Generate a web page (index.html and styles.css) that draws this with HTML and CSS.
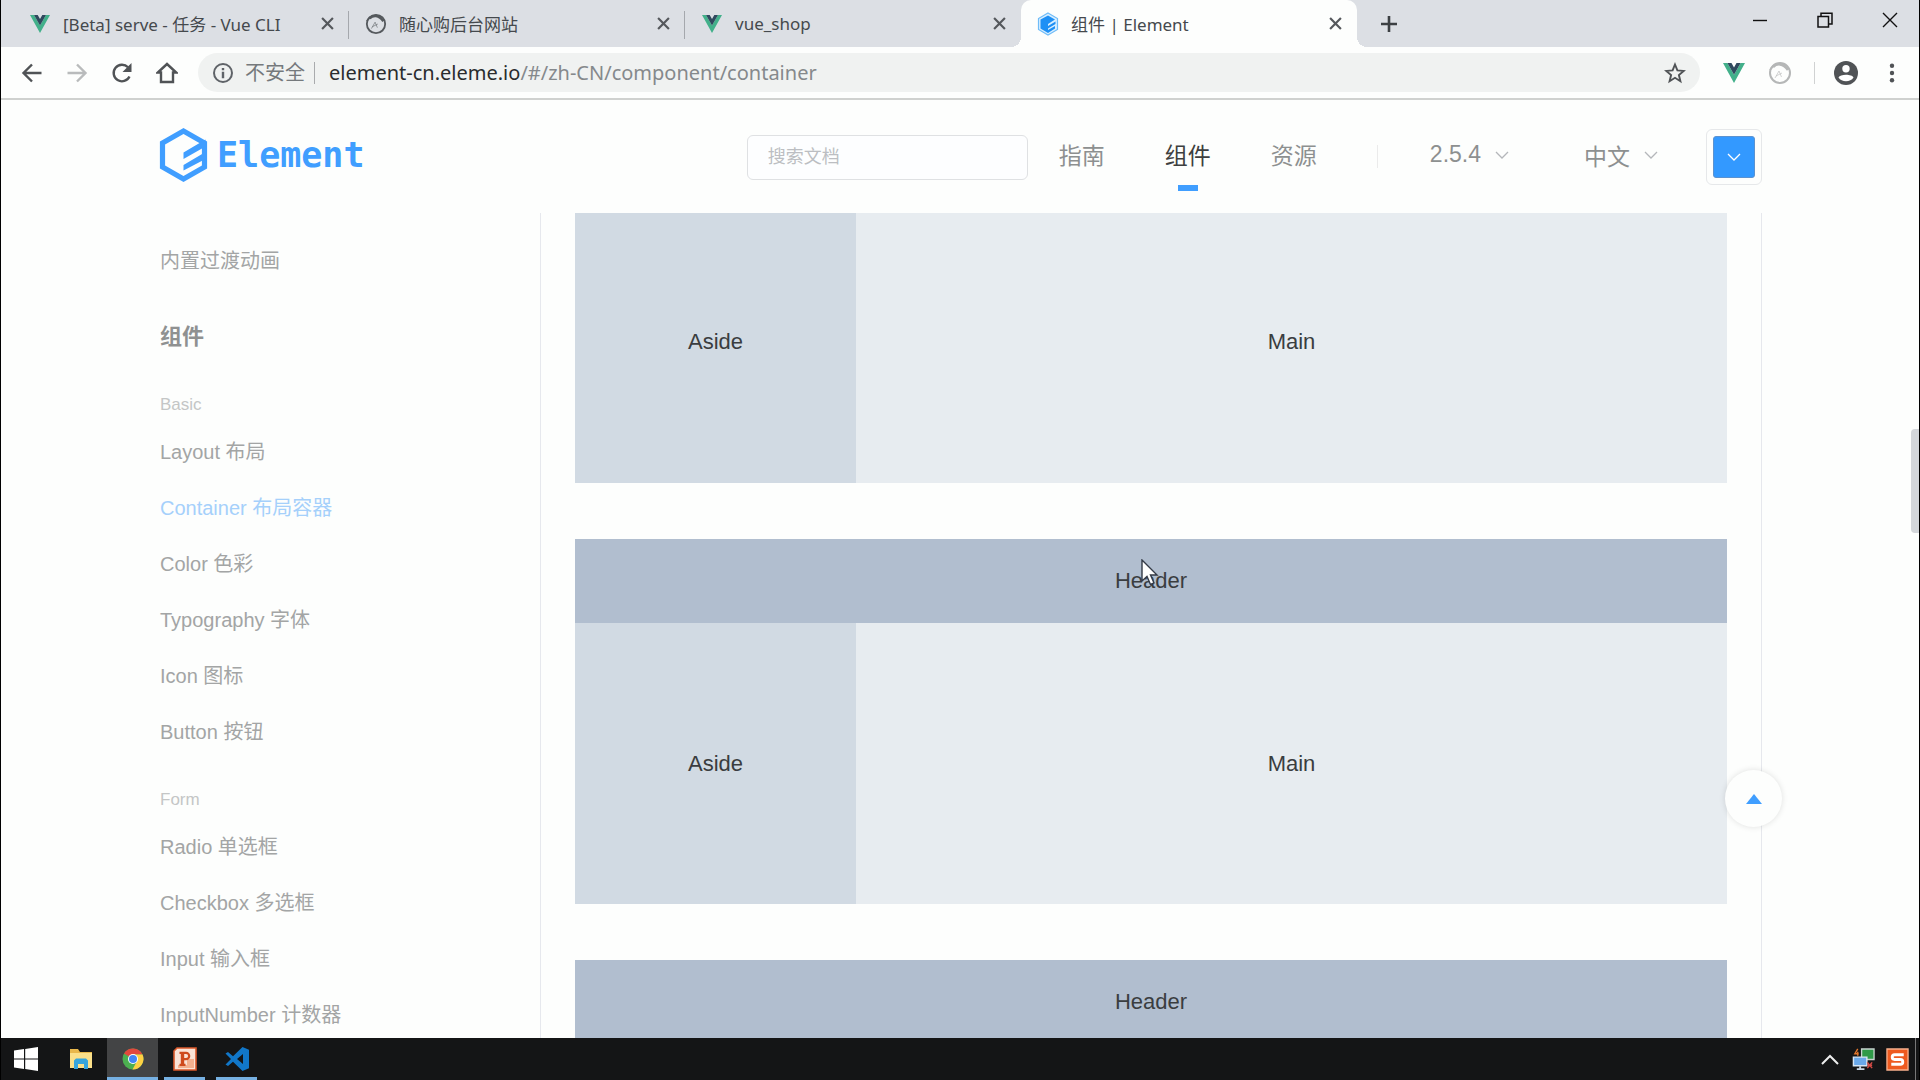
FILE: index.html
```html
<!DOCTYPE html>
<html lang="zh-CN">
<head>
<meta charset="utf-8">
<title>组件 | Element</title>
<link rel="stylesheet" href="styles.css">
</head>
<body>
<svg class="defs" aria-hidden="true">
  <symbol id="vue" viewBox="0 0 20 18"><path fill="#42b08a" d="M0 0h4l6 10.500L16 0h4L10 18z"/><path fill="#2f495e" d="M4 0h3.700L10 4l2.300-4H16l-6 10.500z"/></symbol>
  <symbol id="ring" viewBox="0 0 24 24"><g fill="none" stroke="currentColor"><circle cx="12" cy="12" r="10" stroke-width="2"/><path d="M2 9C5 2 14 1 18 5" stroke-width="1.500"/><path d="M5 6c4-4 10-4 15 3" stroke-width="2.600"/><path d="M7 17l4-7 2.500 6M8 15l6-3" stroke-width="1" opacity=".6"/></g></symbol>
  <symbol id="cross" viewBox="0 0 12 12"><path d="M1 1l10 10M11 1L1 11" stroke="currentColor" stroke-width="2" fill="none"/></symbol>
  <symbol id="chevron" viewBox="0 0 14 8"><path d="M1 1l6 6 6-6" stroke="currentColor" stroke-width="1.300" fill="none"/></symbol>
</svg>

<header class="tabstrip">
  <div class="tab">
    <svg class="favicon"><use href="#vue"/></svg>
    <span class="tab-title">[Beta] serve - 任务 - Vue CLI</span>
    <button class="tab-close" aria-label="关闭"><svg><use href="#cross"/></svg></button>
  </div>
  <div class="tab">
    <svg class="favicon ring"><use href="#ring"/></svg>
    <span class="tab-title">随心购后台网站</span>
    <button class="tab-close" aria-label="关闭"><svg><use href="#cross"/></svg></button>
  </div>
  <div class="tab plain">
    <svg class="favicon"><use href="#vue"/></svg>
    <span class="tab-title">vue_shop</span>
    <button class="tab-close" aria-label="关闭"><svg><use href="#cross"/></svg></button>
  </div>
  <div class="tab active">
    <svg class="favicon ring" viewBox="0 0 22 24"><path d="M11 1l9.500 5.500v11L11 23l-9.500-5.500v-11z" fill="#d9efff" stroke="#6fbcf8" stroke-width="1.200"/><path d="M11 3.500L18 7.500l-7 4.500v2l7.500-4.500v2.500L11 16.500v1.500l7-4v2.500l-7 4.500-7.500-4.500v-9z" fill="#1e90f5"/></svg>
    <span class="tab-title">组件 | Element</span>
    <button class="tab-close" aria-label="关闭"><svg><use href="#cross"/></svg></button>
  </div>
  <button class="new-tab" aria-label="新标签页"><svg viewBox="0 0 18 18"><path d="M9 1v16M1 9h16" stroke="#3c4043" stroke-width="2.600"/></svg></button>
  <div class="window-controls">
    <button aria-label="最小化"><svg viewBox="0 0 16 16"><path d="M1 8.500h14" stroke="#111" stroke-width="1.400"/></svg></button>
    <button aria-label="还原"><svg viewBox="0 0 16 16"><path d="M1 4.500h10.500V15H1zM4 4V1.200h11V12h-3" fill="none" stroke="#111" stroke-width="1.500"/></svg></button>
    <button aria-label="关闭窗口"><svg viewBox="0 0 16 16"><path d="M1 1l14 14M15 1L1 15" stroke="#111" stroke-width="1.400"/></svg></button>
  </div>
</header>

<nav class="toolbar">
  <button aria-label="后退"><svg viewBox="0 0 22 22"><path d="M20.500 11H3M11 2.500L2.500 11l8.500 8.500" fill="none" stroke="#505356" stroke-width="2.400"/></svg></button>
  <button aria-label="前进"><svg viewBox="0 0 22 22"><path d="M1.500 11H19M11 2.500l8.500 8.500-8.500 8.500" fill="none" stroke="#b9bbbc" stroke-width="2.400"/></svg></button>
  <button aria-label="刷新"><svg viewBox="0 0 22 22"><path d="M18.500 14.500A8.300 8.300 0 1 1 17 5.300" fill="none" stroke="#505356" stroke-width="2.400"/><path d="M20.500 1v9h-9z" fill="#505356"/></svg></button>
  <button aria-label="主页"><svg viewBox="0 0 22 22"><path d="M5 20V10.500H1.800L11 2l9.200 8.500H17V20z" fill="none" stroke="#505356" stroke-width="2.400"/></svg></button>
  <div class="omnibox">
    <svg class="info" viewBox="0 0 22 22"><circle cx="11" cy="11" r="9" fill="none" stroke="#5f6368" stroke-width="2"/><path d="M11 6v2.200M11 9.800v6.400" stroke="#5f6368" stroke-width="2.400"/></svg>
    <span class="insecure">不安全</span>
    <span class="url">element-cn.eleme.io<span>/#/zh-CN/component/container</span></span>
    <button aria-label="收藏"><svg viewBox="0 0 22 22"><path d="M11 2.500l2.400 5.900 6.300.5-4.800 4.100 1.500 6.200-5.400-3.400-5.400 3.400L7.100 13 2.300 8.900l6.300-.5z" fill="none" stroke="#505356" stroke-width="1.900"/></svg></button>
  </div>
  <button aria-label="Vue"><svg><use href="#vue"/></svg></button>
  <button class="faded" aria-label="扩展"><svg><use href="#ring"/></svg></button>
  <span class="rule"></span>
  <button aria-label="用户"><svg class="avatar" viewBox="0 0 24 24"><circle cx="12" cy="12" r="12" fill="#505356"/><circle cx="12" cy="7.800" r="3.700" fill="#fff"/><path d="M4.500 16.500c1.500-3.800 13.500-3.800 15 0-3 5-12 5-15 0z" fill="#fff"/></svg></button>
  <button class="menu" aria-label="菜单"><svg viewBox="0 0 22 22"><g fill="#505356"><circle cx="11" cy="3.800" r="2.200"/><circle cx="11" cy="11" r="2.200"/><circle cx="11" cy="18.200" r="2.200"/></g></svg></button>
</nav>

<div class="page">
  <header class="site-header">
    <div class="container site-bar">
      <a class="logo" href="#">
        <svg viewBox="0 0 48 54"><path d="M24 3L45 15v24L24 51 3 39V15z" fill="none" stroke="#409eff" stroke-width="5.200"/><path d="M24 24.500L46 11.500v7L24 31zM24 37L46 24v7L24 42.500z" fill="#409eff"/></svg>
        <span>Element</span>
      </a>
      <input class="search" type="text" placeholder="搜索文档" aria-label="搜索文档">
      <a class="nav-link" href="#">指南</a>
      <a class="nav-link current" href="#">组件</a>
      <a class="nav-link" href="#">资源</a>
      <span class="divider"></span>
      <button class="picker version">2.5.4<svg><use href="#chevron"/></svg></button>
      <button class="picker">中文<svg><use href="#chevron"/></svg></button>
      <button class="theme" aria-label="主题颜色"><span><svg><use href="#chevron"/></svg></span></button>
    </div>
  </header>

  <div class="container body">
    <aside class="sidebar">
      <a href="#">内置过渡动画</a>
      <h2>组件</h2>
      <h3>Basic</h3>
      <a href="#">Layout 布局</a>
      <a class="current" href="#">Container 布局容器</a>
      <a href="#">Color 色彩</a>
      <a href="#">Typography 字体</a>
      <a href="#">Icon 图标</a>
      <a href="#">Button 按钮</a>
      <h3>Form</h3>
      <a href="#">Radio 单选框</a>
      <a href="#">Checkbox 多选框</a>
      <a href="#">Input 输入框</a>
      <a href="#">InputNumber 计数器</a>
    </aside>
    <main class="demo">
      <section class="layout first">
        <div class="row short"><div class="el-aside">Aside</div><div class="el-main">Main</div></div>
      </section>
      <section class="layout">
        <div class="el-header">Header</div>
        <div class="row"><div class="el-aside">Aside</div><div class="el-main">Main</div></div>
      </section>
      <section class="layout">
        <div class="el-header">Header</div>
      </section>
    </main>
  </div>
  <button class="to-top" aria-label="回到顶部"><svg viewBox="0 0 16 10"><path d="M8 0l8 10H0z" fill="#409eff"/></svg></button>
  <span class="scroll-thumb"></span>
  <svg class="cursor" viewBox="0 0 18 28"><path d="M1 1v21l5-4.500 3.500 8 3.500-1.500-3.500-8H16z" fill="#fff" stroke="#343b47" stroke-width="1.400"/></svg>
</div>

<footer class="taskbar">
  <button class="task" aria-label="开始"><svg viewBox="0 0 24 24"><path fill="#fff" d="M0 3.500l10-1.400v9.300H0zM11.200 1.900L24 0v11.400H11.200zM0 12.600h10v9.300L0 20.500zM11.200 12.600H24V24l-12.800-1.900z"/></svg></button>
  <button class="task" aria-label="资源管理器"><svg viewBox="0 0 24 24"><path fill="#e9b84c" d="M1 2h8l2 3h12v16H1z"/><path fill="#fbe08a" d="M1 6h22v15H1z"/><path fill="#37a5dc" d="M5 13.500l2-2h10l2 2V22h-4v-5H9v5H5z"/></svg></button>
  <button class="task running focused" aria-label="Chrome"><svg viewBox="0 0 24 24"><circle cx="12" cy="12" r="10.500" fill="#4caf50"/><path d="M12 12L3 6.600A10.500 10.500 0 0 1 21.500 7.500H12z" fill="#e2483d"/><path d="M12 7.500h9.500A10.500 10.500 0 0 1 11.500 22.500L16 14z" fill="#fdd043"/><circle cx="12" cy="12" r="5" fill="#fff"/><circle cx="12" cy="12" r="4" fill="#4285f4"/></svg></button>
  <button class="task running" aria-label="PowerPoint"><svg viewBox="0 0 24 24"><path d="M4 1h19v22H1V4z" fill="#fbe3d6" stroke="#d9582b" stroke-width="1.600"/><path d="M14 12h7v9H5v-3h9z" fill="#f3b08f"/><path d="M9.500 5v13" fill="none" stroke="#cf4a1d" stroke-width="3.400"/><path d="M6.500 5.800H13a3 3 0 0 1 0 6.400H9M6.500 17.800h6" fill="none" stroke="#cf4a1d" stroke-width="2.200"/></svg></button>
  <button class="task running" aria-label="VS Code"><svg viewBox="0 0 24 24"><path fill="#1177c9" d="M17.500 0L24 2.800v18.400L17.500 24 8 14.800 3 19l-2.500-1.500L6 12 .5 6.500 3 5l5 4.200zm.5 7l-6 5 6 5z"/></svg></button>
  <div class="tray">
    <svg class="up" viewBox="0 0 18 11"><path d="M1 10l8-8 8 8" fill="none" stroke="#eee" stroke-width="2"/></svg>
    <svg viewBox="0 0 24 24"><path d="M10 1h13v11H10z" fill="#2f9a48" stroke="#c8d3cf" stroke-width="1.400"/><path d="M1.500 9.500h14v9h-14z" fill="#6aa9ea" stroke="#d6e5f4" stroke-width="1.500"/><path d="M5 22h8M8.500 19v3" stroke="#c9d6e4" stroke-width="2"/><path d="M6 1L3 6h4M6 4v4" stroke="#e0762c" stroke-width="1.500" fill="none"/><path d="M16 15l5 6m0-6l-5 6m0-3h5" stroke="#d24a45" stroke-width="1.600"/></svg>
    <svg viewBox="0 0 24 24"><path d="M1 1h22v22H1z" fill="#ee5a1f" stroke="#f6b08d" stroke-width="1.400"/><path d="M18.500 7H9a2.500 2.500 0 0 0 0 5h6a2.500 2.500 0 0 1 0 5H5.500" fill="none" stroke="#fff" stroke-width="3"/></svg>
  </div>
</footer>
</body>
</html>
```
FILE: styles.css
```css
* { box-sizing: border-box; }

body {
  margin: 0;
  height: 100vh;
  display: flex;
  flex-direction: column;
  overflow: hidden;
  border: 0 solid #000;
  border-width: 0 1px;
  background: #fdfefd;
  font-family: "Liberation Sans", "Noto Sans CJK SC", sans-serif;
}

button {
  padding: 0;
  border: 0;
  background: none;
  font: inherit;
  color: inherit;
}

a { color: inherit; text-decoration: none; }
svg { display: block; }
.defs { display: none; }

/* Browser tabs */
.tabstrip {
  display: flex;
  height: 47px;
  flex: none;
  padding-left: 12px;
  background: #dcdfe4;
  font-family: "Noto Sans", "Noto Sans CJK SC", sans-serif;
}

.tab {
  display: flex;
  align-items: center;
  width: 336px;
  padding: 0 15px 0 16px;
  position: relative;
  color: #45494d;
  font-size: 17px;
}

.tab::after {
  content: "";
  position: absolute;
  right: 0;
  top: 11px;
  width: 1px;
  height: 28px;
  background: #a5a8ad;
}

.tab.plain::after { display: none; }
.favicon { width: 22px; height: 18px; margin-right: 12px; }
.favicon.ring { height: 24px; color: #55595d; }
.tab-title { flex: 1; white-space: nowrap; }
.tab-close { color: #55585c; }
.tab-close svg { width: 13px; height: 13px; }

.tab.active {
  background: #fdfefd;
  border-radius: 10px 10px 0 0;
}

.tab.active::before,
.tab.active::after {
  content: "";
  position: absolute;
  top: auto;
  bottom: 0;
  width: 10px;
  height: 10px;
  background: radial-gradient(circle at 0 0, transparent 10px, #fdfefd 10px);
}

.tab.active::before { left: -10px; }

.tab.active::after {
  right: -10px;
  background: radial-gradient(circle at 100% 0, transparent 10px, #fdfefd 10px);
}

.new-tab { margin-left: 23px; }
.new-tab svg { width: 18px; height: 18px; }

.window-controls {
  display: flex;
  gap: 49px;
  margin-left: auto;
  padding: 12px 21px 0 0;
  align-items: flex-start;
}

.window-controls svg { width: 16px; height: 16px; }

/* Address bar */
.toolbar {
  display: flex;
  align-items: center;
  flex: none;
  height: 53px;
  gap: 22px;
  padding: 0 16px 0 20px;
  border-bottom: 2px solid #cfd1cf;
  font-family: "Noto Sans", "Noto Sans CJK SC", sans-serif;
}

.toolbar svg { width: 22px; height: 22px; }
.toolbar > button + button { margin-left: 1px; }

.omnibox {
  display: flex;
  align-items: center;
  flex: 1;
  height: 39px;
  padding: 0 14px;
  border-radius: 20px;
  background: #f0f2f1;
  font-size: 20px;
  margin: 0 1px 0 -2px;
}

.insecure {
  margin-left: 11px;
  padding-right: 9px;
  border-right: 1px solid #a9abad;
  color: #75797c;
  line-height: 22px;
}

.url { flex: 1; margin-left: 14px; color: #2a2c2e; }
.url span { color: #85898c; }
.toolbar .faded { color: #b5b7b7; }
.toolbar .faded svg { width: 24px; height: 24px; }
.rule { width: 1px; height: 22px; margin-right: -3px; background: #d0d2d2; }
.toolbar .avatar { width: 24px; height: 24px; }

/* Web page */
.page {
  flex: 1;
  min-height: 0;
  position: relative;
  overflow: hidden;
}

.container { max-width: 1604px; margin: 0 auto; }
.site-header { height: 113px; }

.site-bar {
  display: flex;
  align-items: center;
  height: 112px;
  color: #8d9090;
  font-size: 23px;
}

.logo {
  display: flex;
  align-items: center;
  gap: 9px;
  margin-left: 1px;
  margin-right: auto;
  padding-bottom: 2px;
  color: #409eff;
  font: bold 35px "DejaVu Sans Mono", monospace;
}

.logo svg { width: 49px; height: 54px; }

.search {
  width: 281px;
  height: 45px;
  margin: 2px 31px 0 0;
  padding: 0 20px;
  border: 1px solid #dfe1e3;
  border-radius: 6px;
  background: #fdfeff;
  font: 18px "Liberation Sans", "Noto Sans CJK SC", sans-serif;
}

.search::placeholder { color: #bcbec2; opacity: 1; }

.nav-link {
  position: relative;
  margin-right: 60px;
  line-height: 110px;
}

.nav-link.current { color: #3d3f40; }

.nav-link.current::after {
  content: "";
  position: absolute;
  left: 50%;
  bottom: 20px;
  width: 20px;
  height: 6px;
  margin-left: -10px;
  background: #409eff;
}

.divider { width: 1px; height: 23px; margin-right: 52px; background: #ebebeb; }

.picker {
  display: flex;
  align-items: center;
  gap: 14px;
  margin-right: 48px;
  padding-bottom: 3px;
}

.picker.version { margin-right: 75px; }
.picker svg { width: 14px; height: 8px; color: #b4b7ba; }

.theme {
  width: 56px;
  height: 56px;
  margin-top: 2px;
  padding: 6px;
  border: 1px solid #e6e8ea;
  border-radius: 6px;
}

.theme span {
  display: grid;
  place-items: center;
  height: 42px;
  border: 1px solid #5b92d0;
  border-radius: 3px;
  background: #3399ff;
  color: #fff;
}

.theme svg { width: 14px; height: 8px; }

.body { display: grid; grid-template-columns: 382px 1fr; }

.sidebar {
  padding: 20px 0 0 2px;
  color: #a3a5a5;
  font-size: 20px;
}

.sidebar a { display: block; line-height: 56px; }
.sidebar .current { color: #a5d0fb; }

.sidebar h2 {
  margin: 20px 0 0;
  color: #8f9191;
  font-size: 22px;
  line-height: 56px;
}

.sidebar h3 {
  margin: 21px 0 0;
  color: #c4c6c6;
  font-size: 17px;
  font-weight: normal;
  line-height: 38px;
}

.demo {
  padding: 0 34px;
  border: solid #e6e8ed;
  border-width: 0 1px;
  color: #3a3d40;
  font-size: 22px;
}

.layout { margin-bottom: 56px; }
.row { display: grid; grid-template-columns: 281px 1fr; height: 281px; text-align: center; line-height: 281px; }
.row.short { height: 270px; line-height: 257px; }
.el-header { height: 84px; background: #b1becf; text-align: center; line-height: 84px; }
.el-aside { background: #d1dae3; }
.el-main { background: #e7ecf0; }

.to-top {
  display: grid;
  place-items: center;
  position: absolute;
  right: 137px;
  bottom: 211px;
  width: 57px;
  height: 57px;
  border-radius: 50%;
  background: #fdfefd;
  box-shadow: 0 0 6px rgba(0, 0, 0, .12);
}

.to-top svg { width: 16px; height: 10px; }

.scroll-thumb {
  position: absolute;
  right: 0;
  top: 329px;
  width: 8px;
  height: 104px;
  border-radius: 4px 0 0 4px;
  background: #d3d6da;
}

.cursor {
  position: absolute;
  left: 1140px;
  top: 459px;
  width: 18px;
  height: 28px;
}

/* Windows taskbar */
.taskbar {
  display: flex;
  flex: none;
  height: 42px;
  padding-right: 3px;
  background: #141516;
}

.task {
  display: grid;
  place-items: center;
  width: 51px;
  margin-right: 1px;
}

.task:first-child { width: 50px; margin-right: 4px; }
.task svg { width: 24px; height: 24px; }
.task.running { position: relative; }

.task.running::after {
  content: "";
  position: absolute;
  left: 5px;
  right: 5px;
  bottom: 0;
  height: 3px;
  background: #76b0e2;
}

.task.focused { background: #434445; }
.task.focused::after { left: 0; right: 0; }

.tray {
  display: flex;
  align-items: center;
  gap: 11px;
  margin-left: auto;
  padding-right: 6px;
  border-right: 1px solid #777;
}

.tray svg { width: 23px; height: 23px; }
.tray .up { width: 18px; height: 11px; margin-right: 2px; }
```
